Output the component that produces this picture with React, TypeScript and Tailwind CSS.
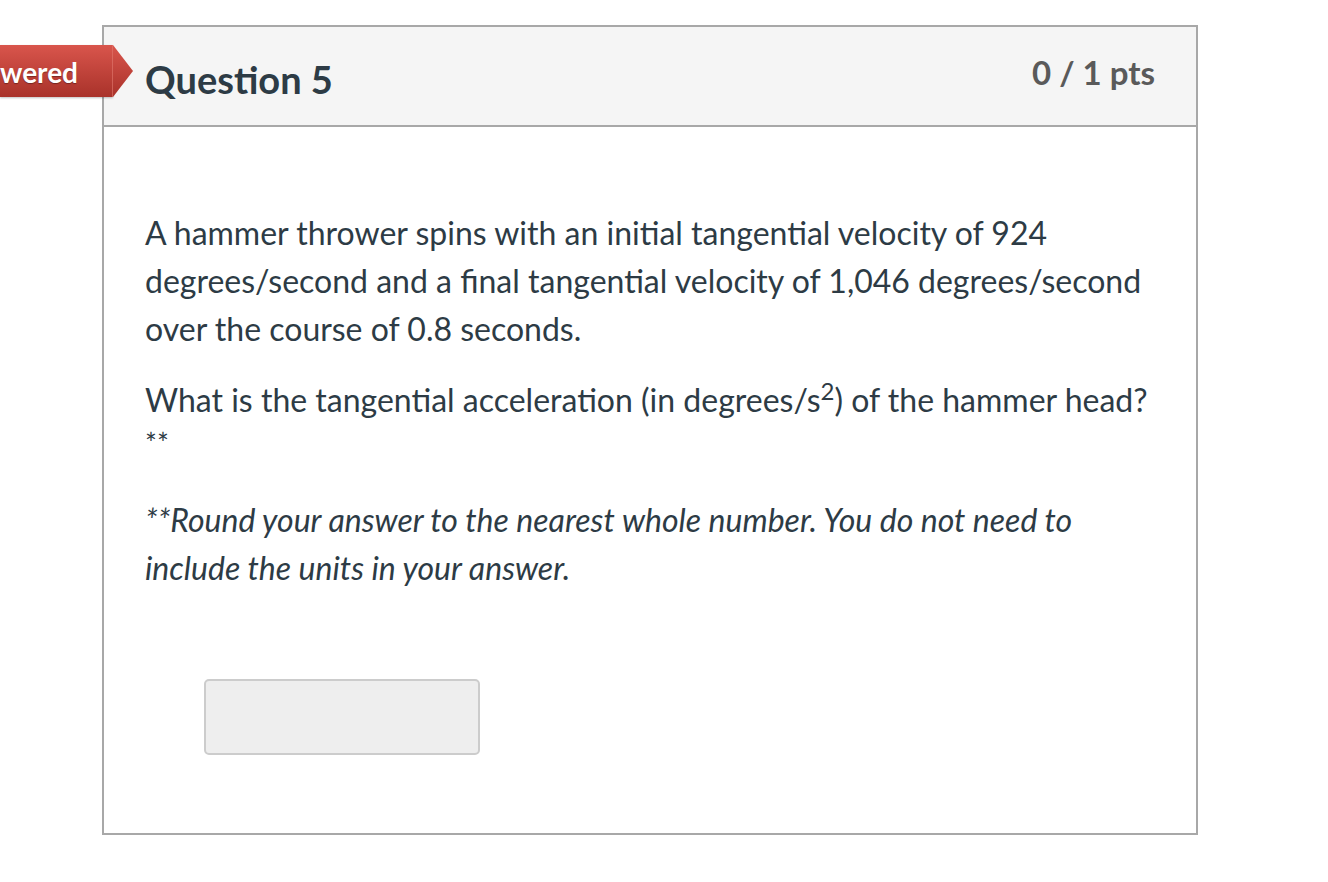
export default function App() {
  return (
    <div className="relative min-h-[882px] w-[1328px] bg-white font-['Lato',sans-serif] text-[#2d3b45]">
      {/* status ribbon, hangs over the card's left edge */}
      <div className="absolute left-0 top-[45px] z-10 flex h-[52px]">
        <div className="flex h-full w-[113px] items-center justify-end overflow-hidden bg-gradient-to-b from-[#d9554c] to-[#a9322a] pr-[35px] shadow-[0_1px_2px_rgba(0,0,0,0.25)]">
          <span className="whitespace-nowrap pt-[2px] text-[28px] font-bold leading-none text-white [text-shadow:0_1px_1px_rgba(0,0,0,0.35)]">
            Unanswered
          </span>
        </div>
        <svg width="21" height="52" viewBox="0 0 21 52" className="-ml-px block">
          <defs>
            <linearGradient id="rib" x1="0" y1="0" x2="0" y2="1">
              <stop offset="0" stopColor="#d9554c" />
              <stop offset="1" stopColor="#a9322a" />
            </linearGradient>
          </defs>
          <path d="M0 0 H1 L21 26 L1 52 H0 Z" fill="url(#rib)" />
          <line x1="0.5" y1="0" x2="0.5" y2="52" stroke="#e27a70" strokeWidth="1" opacity="0.6" />
        </svg>
      </div>

      <div className="ml-[102px] pt-[25px]">
        <div className="w-[1096px] border-2 border-[#a8a8a8] bg-white">
          <div className="flex h-[100px] items-start justify-between border-b-2 border-[#a8a8a8] bg-[#f5f5f5] px-[41px]">
            <h2 className="pt-[30px] text-[38px] font-bold leading-[1.2] text-[#2d3b45]">Question 5</h2>
            <div className="pt-[26px] text-[33px] font-bold leading-[1.2] text-[#5a5a5a]">0 / 1 pts</div>
          </div>

          <div className="px-[41px] pb-[78px] pt-[82px] text-[32px] leading-[48px]">
            <p className="mb-[23px]">
              A hammer thrower spins with an initial tangential velocity of 924 degrees/second and a final
              tangential velocity of 1,046 degrees/second over the course of 0.8 seconds.
            </p>
            <p className="mb-[23px]">
              What is the tangential acceleration (in degrees/s<sup>2</sup>) of the hammer head?
              <br />
              <span className="relative top-[-6px] text-[28px]">**</span>
            </p>
            <p className="italic">
              **Round your answer to the nearest whole number. You do not need to include the units in your
              answer.
            </p>

            <div className="ml-[59px] mt-[87px]">
              <input
                type="text"
                aria-label="answer"
                className="block h-[76px] w-[276px] rounded-[5px] border-2 border-[#cccccc] bg-[#eeeeee] outline-none"
              />
            </div>
          </div>
        </div>
      </div>
    </div>
  );
}
